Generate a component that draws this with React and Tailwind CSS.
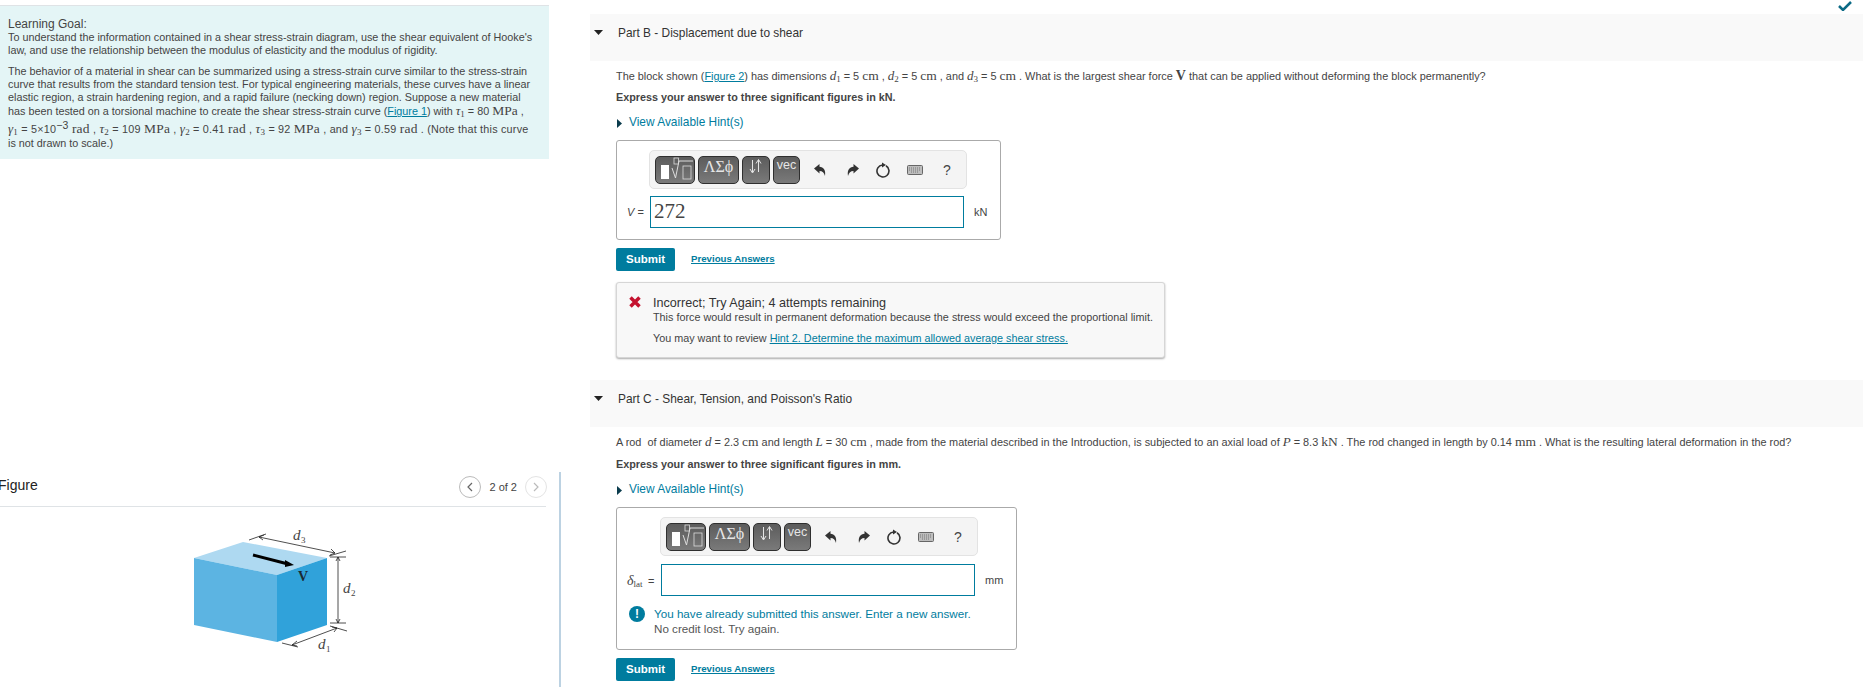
const LINK = "text-[#007c9e] underline";

function V({ children }) {
  return <span className="font-['Liberation_Serif',serif] italic text-[13px]">{children}</span>;
}
function U({ children }) {
  return <span className="font-['Liberation_Serif',serif] text-[13.500px]">{children}</span>;
}
function S({ children }) {
  return <sub className="text-[9px] font-['Liberation_Serif',serif] not-italic align-[-2px] bottom-0 leading-none">{children}</sub>;
}

function Tri({ className }) {
  return (
    <svg width="9" height="5" viewBox="0 0 9 5" className={className}>
      <path d="M0 0H9L4.500 5Z" fill="#222" />
    </svg>
  );
}

function HintRow() {
  return (
    <div className="flex items-center h-[14px] text-[#007c9e] text-[11.900px]">
      <svg width="5" height="9" viewBox="0 0 5 9" className="ml-[1px] mr-[7px]">
        <path d="M0 0L5 4.500L0 9Z" fill="#0b3c4d" />
      </svg>
      View Available Hint(s)
    </div>
  );
}

function Btn({ w, children }) {
  return (
    <div
      className={`${w} h-[28px] rounded-[5px] border border-[#2f2f2f] bg-gradient-to-b from-[#5c5c5c] to-[#7a7a7a] text-white overflow-hidden shrink-0`}
    >
      {children}
    </div>
  );
}

function Toolbar({ className }) {
  return (
    <div className={`${className} w-[318px] h-[39px] rounded-[5px] border border-[#e3e3e3] bg-[#f4f4f4] flex items-center pl-[5px]`}>
      <div className="flex gap-[3px]">
        <Btn w="w-[40px]">
          <svg width="38" height="26" viewBox="0 0 38 26">
            <rect x="5" y="8" width="8" height="14" fill="#fff" />
            <rect x="18" y="1" width="4.500" height="6" fill="none" stroke="#ddd" strokeWidth="0.800" />
            <path d="M16 11L19.500 21L23 4H37" fill="none" stroke="#ddd" strokeWidth="1" />
            <rect x="27" y="9" width="8" height="13" fill="none" stroke="#ddd" strokeWidth="0.800" />
          </svg>
        </Btn>
        <Btn w="w-[41px]">
          <div className="text-center font-['Liberation_Serif',serif] text-[16px] leading-[20px] text-[#e6e6e6]">ΛΣϕ</div>
        </Btn>
        <Btn w="w-[28px]">
          <svg width="26" height="26" viewBox="0 0 26 26">
            <path d="M9.500 3V15M7 12L9.500 16L12 12M15.500 15V3M13 6.500L15.500 2.500L18 6.500" fill="none" stroke="#e6e6e6" strokeWidth="1" />
          </svg>
        </Btn>
        <Btn w="w-[27px]">
          <div className="text-center text-[12.500px] leading-[16px] text-[#e6e6e6]">vec</div>
        </Btn>
      </div>
      <div className="flex items-center ml-[13px]">
        <svg width="14" height="14" viewBox="0 0 14 14">
          <path d="M1 5.500L6.500 1V3.800C10.500 4 13 7 12 13C11 9.500 9.500 8.200 6.500 8V10.500Z" fill="#333" />
        </svg>
        <svg width="14" height="14" viewBox="0 0 14 14" className="ml-[19px]">
          <path d="M13 5.500L7.500 1V3.800C3.500 4 1 7 2 13C3 9.500 4.500 8.200 7.500 8V10.500Z" fill="#333" />
        </svg>
        <svg width="15" height="16" viewBox="0 0 15 16" className="ml-[15px]">
          <path d="M11 3.800A6 6 0 1 1 7.500 3" fill="none" stroke="#333" strokeWidth="1.600" />
          <path d="M7 0.500L11 3L7 5.500Z" fill="#333" />
        </svg>
        <svg width="16" height="10" viewBox="0 0 16 10" className="ml-[17px]">
          <rect x="0.500" y="0.500" width="15" height="9" rx="1" fill="#bdbdbd" stroke="#666" />
          <path d="M2 3H14M2 5H14M4 7H12" stroke="#777" strokeWidth="1" strokeDasharray="1 1" />
        </svg>
        <span className="ml-[20px] text-[14px] leading-none text-[#444]">?</span>
      </div>
    </div>
  );
}

function Submit() {
  return (
    <div className="flex items-center">
      <div className="w-[59px] h-[23px] rounded-[2px] bg-[#007c9e] text-white font-bold text-[11.500px] flex items-center justify-center">
        Submit
      </div>
      <span className={`ml-[16px] font-bold text-[9.700px] ${LINK}`}>Previous Answers</span>
    </div>
  );
}

function PartBar({ children, className }) {
  return (
    <div className={`${className} h-[47px] bg-[#f9f9f9] pl-[4px] pt-[12px] flex items-start text-[11.900px]`}>
      <Tri className="mt-[4px]" />
      <div className="ml-[15px] text-[#333] leading-[14px]">{children}</div>
    </div>
  );
}

function Block() {
  return (
    <svg width="200" height="150" viewBox="180 510 200 150" className="block">
      <polygon points="194,559 243,543 327,559 277,576" fill="#aed9f1" />
      <polygon points="194,559 277,576 277,643 194,626" fill="#5cb4e2" />
      <polygon points="277,576 327,559 327,626 277,643" fill="#30a2da" />
      <path d="M253 556L288 565" stroke="#000" strokeWidth="3" />
      <path d="M285 561L294 566L285 568Z" fill="#000" />
      <g stroke="#222" strokeWidth="0.800" fill="none">
        <path d="M259 538L335 554M249 541L266 535M329 557L346 552" />
        <path d="M338 558V624M330 558H346M330 624H346" />
        <path d="M292 646L337 629M282 644L298 648M330 627L347 632" />
        <path d="M264 536L259 538L263 541M331 550L335 554L330 556" />
        <path d="M336 562L338 558L340 562M336 620L338 624L340 620" />
        <path d="M297 642L292 646L297 647M332 628L337 629L334 633" />
      </g>
      <text x="293" y="541" className="font-['Liberation_Serif',serif] italic" fontSize="15" fill="#444">d</text>
      <text x="301" y="544" className="font-['Liberation_Serif',serif]" fontSize="9" fill="#444">3</text>
      <text x="343" y="594" className="font-['Liberation_Serif',serif] italic" fontSize="15" fill="#444">d</text>
      <text x="351" y="597" className="font-['Liberation_Serif',serif]" fontSize="9" fill="#444">2</text>
      <text x="318" y="650" className="font-['Liberation_Serif',serif] italic" fontSize="15" fill="#444">d</text>
      <text x="326" y="653" className="font-['Liberation_Serif',serif]" fontSize="9" fill="#444">1</text>
      <text x="298" y="582" className="font-['Liberation_Serif',serif] font-bold" fontSize="14" fill="#1a2a33">V</text>
    </svg>
  );
}

function LeftColumn() {
  return (
    <div className="w-[590px] shrink-0 flex flex-col">
      <div className="w-[549px] h-[154px] mt-[5px] border-t border-[#dfe3e6] bg-[#e4f5f6] pl-[8px] pt-[12px] text-[10.800px] text-[#444] leading-[13.500px] whitespace-nowrap">
        <div className="text-[12px] leading-[12.500px]">Learning Goal:</div>
        <div>
          To understand the information contained in a shear stress-strain diagram, use the shear equivalent of Hooke's<br />
          law, and use the relationship between the modulus of elasticity and the modulus of rigidity.
        </div>
        <div className="mt-[7px] leading-[13.300px]">
          The behavior of a material in shear can be summarized using a stress-strain curve similar to the stress-strain<br />
          curve that results from the standard tension test. For typical engineering materials, these curves have a linear<br />
          elastic region, a strain hardening region, and a rapid failure (necking down) region. Suppose a new material<br />
          has been tested on a torsional machine to create the shear stress-strain curve (<span className={LINK}>Figure 1</span>) with <V>τ</V><S>1</S> = 80 <U>MPa</U> ,
        </div>
        <div className="mt-[1px] leading-[13.500px]">
          <span className="tracking-[0.220px]">
            <V>γ</V><S>1</S> = 5×10<sup className="text-[10.500px] align-[4px] top-0 leading-none">−3</sup> <U>rad</U> , <V>τ</V><S>2</S> = 109 <U>MPa</U> , <V>γ</V><S>2</S> = 0.41 <U>rad</U> , <V>τ</V><S>3</S> = 92 <U>MPa</U> , and <V>γ</V><S>3</S> = 0.59 <U>rad</U> . (Note that this curve
          </span>
          <br />
          is not drawn to scale.)
        </div>
      </div>
      <div className="w-[561px] flex-1 mt-[313px] border-r-2 border-[#bcd2e2] pt-[4px]">
        <div className="w-[548px] h-[31px] border-b border-[#dfe3e6] flex items-start justify-between -ml-[2px]">
          <span className="text-[14px] leading-[16px] mt-[1px] text-[#222]">Figure</span>
          <div className="flex items-center -mr-[1px]">
            <div className="w-[22px] h-[22px] rounded-full border border-[#bbb] flex items-center justify-center">
              <svg width="6" height="10" viewBox="0 0 6 10"><path d="M5 1L1 5L5 9" fill="none" stroke="#666" strokeWidth="1.200" /></svg>
            </div>
            <span className="mx-[8px] text-[11px] text-[#444]">2 of 2</span>
            <div className="w-[22px] h-[22px] rounded-full border border-[#e4e4e4] flex items-center justify-center">
              <svg width="6" height="10" viewBox="0 0 6 10"><path d="M1 1L5 5L1 9" fill="none" stroke="#bbb" strokeWidth="1.200" /></svg>
            </div>
          </div>
        </div>
        <div className="ml-[180px] mt-[2px]">
          <Block />
        </div>
      </div>
    </div>
  );
}

function RightColumn() {
  return (
    <div className="w-[1273px] shrink-0 text-[#444] text-[10.900px]">
      <PartBar className="mt-[14px]">
        <span>Part B</span> - Displacement due to shear
      </PartBar>
      <div className="pl-[26px]">
        <div className="mt-[8px] h-[14px] leading-[14px] whitespace-nowrap">
          The block shown (<span className={LINK}>Figure 2</span>) has dimensions <V>d</V><S>1</S> = 5 <U>cm</U> , <V>d</V><S>2</S> = 5 <U>cm</U> , and <V>d</V><S>3</S> = 5 <U>cm</U> . What is the largest shear force <span className="font-['Liberation_Serif',serif] font-bold text-[14px]">V</span> that can be applied without deforming the block permanently?
        </div>
        <div className="mt-[7px] h-[14px] leading-[14px] font-bold text-[10.800px]">Express your answer to three significant figures in kN.</div>
        <div className="mt-[12px]"><HintRow /></div>
        <div className="mt-[10px] w-[385px] h-[100px] rounded-[3px] border border-[#aaa]">
          <Toolbar className="ml-[32px] mt-[9px]" />
          <div className="flex items-center mt-[7px]">
            <span className="ml-[10px] w-[23px] text-[11px]"><i>V</i> =</span>
            <div className="w-[314px] h-[32px] border border-[#007c9e] pl-[3px] font-['Liberation_Serif',serif] text-[21px] leading-[29px] text-[#444]">272</div>
            <span className="ml-[10px] text-[11px]">kN</span>
          </div>
        </div>
        <div className="mt-[8px]"><Submit /></div>
        <div className="mt-[11px] w-[549px] h-[76px] rounded-[3px] border border-[#d6d6d6] bg-[#f8f8f8] shadow-[0_1px_2px_#aaa] flex">
          <svg width="12" height="12" viewBox="0 0 12 12" className="ml-[12px] mt-[13px] shrink-0">
            <path d="M1.500 1.500L10.500 10.500M10.500 1.500L1.500 10.500" stroke="#c4122f" strokeWidth="3.500" />
          </svg>
          <div className="ml-[12px] pt-[13px] whitespace-nowrap">
            <div className="text-[12.600px] leading-[14px] text-[#333]">Incorrect; Try Again; 4 attempts remaining</div>
            <div className="text-[10.800px] leading-[13px] mt-[1px]">This force would result in permanent deformation because the stress would exceed the proportional limit.</div>
            <div className="text-[10.800px] leading-[13px] mt-[8px]">You may want to review <span className={LINK}>Hint 2. Determine the maximum allowed average shear stress.</span></div>
          </div>
        </div>
      </div>
      <PartBar className="mt-[22px]">
        <span>Part C</span> - Shear, Tension, and Poisson's Ratio
      </PartBar>
      <div className="pl-[26px]">
        <div className="mt-[8px] h-[14px] leading-[14px] whitespace-nowrap">
          A rod&nbsp; of diameter <V>d</V> = 2.3 <U>cm</U> and length <V>L</V> = 30 <U>cm</U> , made from the material described in the Introduction, is subjected to an axial load of <V>P</V> = 8.3 <U>kN</U> . The rod changed in length by 0.14 <U>mm</U> . What is the resulting lateral deformation in the rod?
        </div>
        <div className="mt-[8px] h-[14px] leading-[14px] font-bold text-[10.800px]">Express your answer to three significant figures in mm.</div>
        <div className="mt-[12px]"><HintRow /></div>
        <div className="mt-[10px] w-[401px] h-[143px] rounded-[3px] border border-[#aaa]">
          <Toolbar className="ml-[43px] mt-[9px]" />
          <div className="flex items-center mt-[8px]">
            <span className="ml-[10px] w-[34px] whitespace-nowrap font-['Liberation_Serif',serif] text-[14px]"><i>δ</i><S>lat</S> <span className="font-['Liberation_Sans',sans-serif] text-[11px] ml-[2px]">=</span></span>
            <div className="w-[314px] h-[32px] border border-[#007c9e]" />
            <span className="ml-[10px] text-[11px]">mm</span>
          </div>
          <div className="flex mt-[10px] ml-[12px]">
            <div className="w-[16px] h-[16px] rounded-full bg-[#007c9e] text-white font-bold text-[12px] leading-[16px] text-center shrink-0">!</div>
            <div className="ml-[9px] leading-[15px] text-[11.650px]">
              <div className="text-[#007c9e]">You have already submitted this answer. Enter a new answer.</div>
              <div className="text-[#555]">No credit lost. Try again.</div>
            </div>
          </div>
        </div>
        <div className="mt-[8px]"><Submit /></div>
      </div>
    </div>
  );
}

export default function App() {
  return (
    <div className="relative w-[1868px] h-[687px] overflow-hidden bg-white flex font-['Liberation_Sans',Arial,sans-serif] text-[12px]">
      <LeftColumn />
      <RightColumn />
      <svg width="14" height="10" viewBox="0 0 14 10" className="absolute left-[1838px] top-[1px]">
        <path d="M1 5L5 9L13 1" fill="none" stroke="#0b6a85" strokeWidth="2.500" />
      </svg>
    </div>
  );
}
